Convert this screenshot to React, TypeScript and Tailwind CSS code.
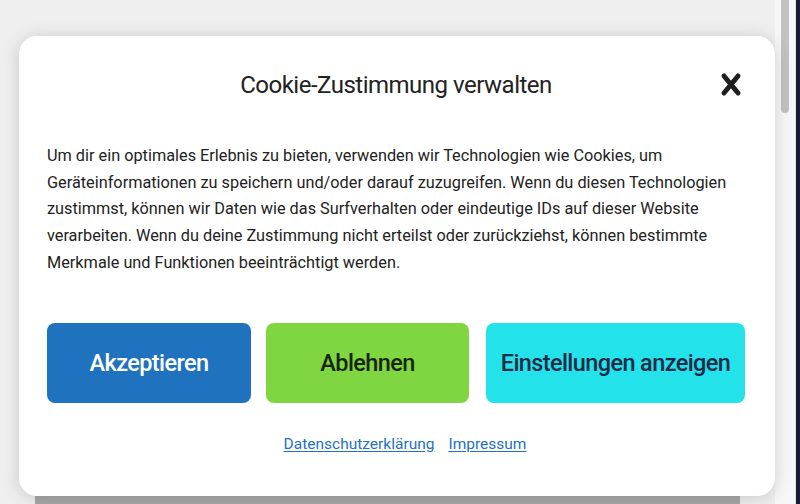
import React from "react";

const CloseIcon = () => (
  <svg width="22" height="25" viewBox="0 0 22 25" fill="none">
    <path d="M4 4 L18 21 M18 4 L4 21" stroke="#1f1f1f" strokeWidth="5" strokeLinecap="round" />
  </svg>
);

const App = () => {
  const buttons = [
    { label: "Akzeptieren", className: "w-[204px] bg-[#1f72bd] text-white" },
    { label: "Ablehnen", className: "w-[203px] bg-[#7fd640] text-[#17250f]" },
    { label: "Einstellungen anzeigen", className: "flex-1 ml-[2px] bg-[#24e2ea] text-[#1d2a48]" },
  ];

  return (
    <div className="h-[504px] w-[800px] flex overflow-hidden bg-[#efefef] font-['Roboto',sans-serif]">
      <div className="flex-1 flex flex-col">
        <div className="h-[36px]" />
        <div className="relative h-[460px] ml-[19px] rounded-[18px] bg-white shadow-[0_2px_18px_rgba(0,0,0,0.16)] px-[28px] pr-[30px] pt-[33px]">
          <div className="relative">
            <h2 className="text-center text-[24px] leading-[32px] text-[#222] tracking-[-0.5px]">Cookie-Zustimmung verwalten</h2>
            <button className="absolute right-[3px] top-[3px]" aria-label="Schließen">
              <CloseIcon />
            </button>
          </div>

          <p className="mt-[42px] text-[16.3px] leading-[26.7px] text-[#222]">
            Um dir ein optimales Erlebnis zu bieten, verwenden wir Technologien wie Cookies, um Geräteinformationen zu speichern
            und/oder darauf zuzugreifen. Wenn du diesen Technologien zustimmst, können wir Daten wie das Surfverhalten oder
            eindeutige IDs auf dieser Website verarbeiten. Wenn du deine Zustimmung nicht erteilst oder zurückziehst, können
            bestimmte Merkmale und Funktionen beeinträchtigt werden.
          </p>

          <div className="mt-[46px] flex gap-[15px]">
            {buttons.map((b) => (
              <button
                key={b.label}
                className={`h-[80px] rounded-[8px] pt-[3px] text-[23.5px] font-medium tracking-[-0.6px] ${b.className}`}
              >
                {b.label}
              </button>
            ))}
          </div>

          <div className="mt-[31px] flex justify-center gap-[14px] pl-[18px] text-[15.5px] leading-[20px] text-[#1f72bd]">
            <a href="#" className="underline underline-offset-2">Datenschutzerklärung</a>
            <a href="#" className="underline underline-offset-2">Impressum</a>
          </div>
        </div>
        <div className="h-[8px] mx-[35px] bg-[#a8a8a8]" />
      </div>

      {/* scrollbar */}
      <div className="w-[25px] flex">
        <div className="w-[21px] bg-[#f7f7f7] border-r border-[#e2e2e2] pl-[6px]">
          <div className="w-[8px] h-[113px] rounded-b-full bg-[#c2c2c2]" />
        </div>
        <div className="flex-1 bg-[#1b1a3a]" />
      </div>
    </div>
  );
};

export default App;
